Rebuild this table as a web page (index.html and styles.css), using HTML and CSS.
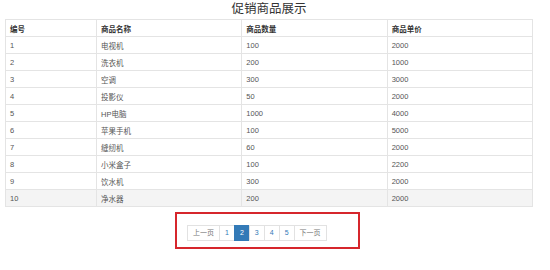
FILE: index.html
```html
<!DOCTYPE html>
<html lang="zh-CN">
<head>
  <meta charset="UTF-8">
  <title>促销商品展示</title>
  <link rel="stylesheet" href="styles.css">
</head>
<body>
  <div class="container">
    <h2 class="title">促销商品展示</h2>
    <table class="goods">
      <thead>
        <tr><th class="col-id">编号</th><th>商品名称</th><th>商品数量</th><th>商品单价</th></tr>
      </thead>
      <tbody>
        <tr><td>1</td><td>电视机</td><td>100</td><td>2000</td></tr>
        <tr><td>2</td><td>洗衣机</td><td>200</td><td>1000</td></tr>
        <tr><td>3</td><td>空调</td><td>300</td><td>3000</td></tr>
        <tr><td>4</td><td>投影仪</td><td>50</td><td>2000</td></tr>
        <tr><td>5</td><td>HP电脑</td><td>1000</td><td>4000</td></tr>
        <tr><td>6</td><td>苹果手机</td><td>100</td><td>5000</td></tr>
        <tr><td>7</td><td>缝纫机</td><td>60</td><td>2000</td></tr>
        <tr><td>8</td><td>小米盒子</td><td>100</td><td>2200</td></tr>
        <tr><td>9</td><td>饮水机</td><td>300</td><td>2000</td></tr>
        <tr class="hover"><td>10</td><td>净水器</td><td>200</td><td>2000</td></tr>
      </tbody>
    </table>
    <div class="pager-wrap">
      <div class="pager-box">
        <ul class="pagination">
          <li><a class="muted">上一页</a></li>
          <li><a>1</a></li>
          <li class="active"><a>2</a></li>
          <li><a>3</a></li>
          <li><a>4</a></li>
          <li><a>5</a></li>
          <li><a class="muted">下一页</a></li>
        </ul>
      </div>
    </div>
  </div>
</body>
</html>
```

FILE: styles.css
```css
body {
  margin: 0;
  font-family: "Liberation Sans", "Noto Sans CJK SC", sans-serif;
  color: #555;
  background: #fff;
}
.container {
  padding: 0 17px 0 5px;
}
.title {
  margin: 0;
  height: 19px;
  line-height: 19px;
  text-align: center;
  font-size: 12.5px;
  font-weight: normal;
  color: #333;
}
.goods {
  width: 100%;
  border-collapse: collapse;
  table-layout: fixed;
  font-size: 7.5px;
}
.goods th,
.goods td {
  border: 1px solid #e4e4e4;
  height: 16px;
  padding: 0 4px;
  text-align: left;
  vertical-align: middle;
}
.goods th {
  font-weight: bold;
  color: #333;
}
.goods .col-id {
  width: 82px;
}
.goods .hover td {
  background: #f4f4f4;
}
.pager-wrap {
  display: flex;
  justify-content: center;
  padding-top: 5px;
}
.pager-box {
  width: 171px;
  border: 2px solid #d6262c;
  padding: 11px 0 6px 10px;
  margin-right: 3px;
}
.pagination {
  display: flex;
  margin: 0;
  padding: 0;
  list-style: none;
  font-size: 7px;
}
.pagination li + li {
  margin-left: -1px;
}
.pagination a {
  display: block;
  height: 14px;
  line-height: 14px;
  padding: 0 5px;
  border: 1px solid #e2e2e2;
  color: #337ab7;
  background: #fff;
}
.pagination a.muted {
  color: #777;
}
.pagination .active a {
  background: #337ab7;
  border-color: #337ab7;
  color: #fff;
}
```
